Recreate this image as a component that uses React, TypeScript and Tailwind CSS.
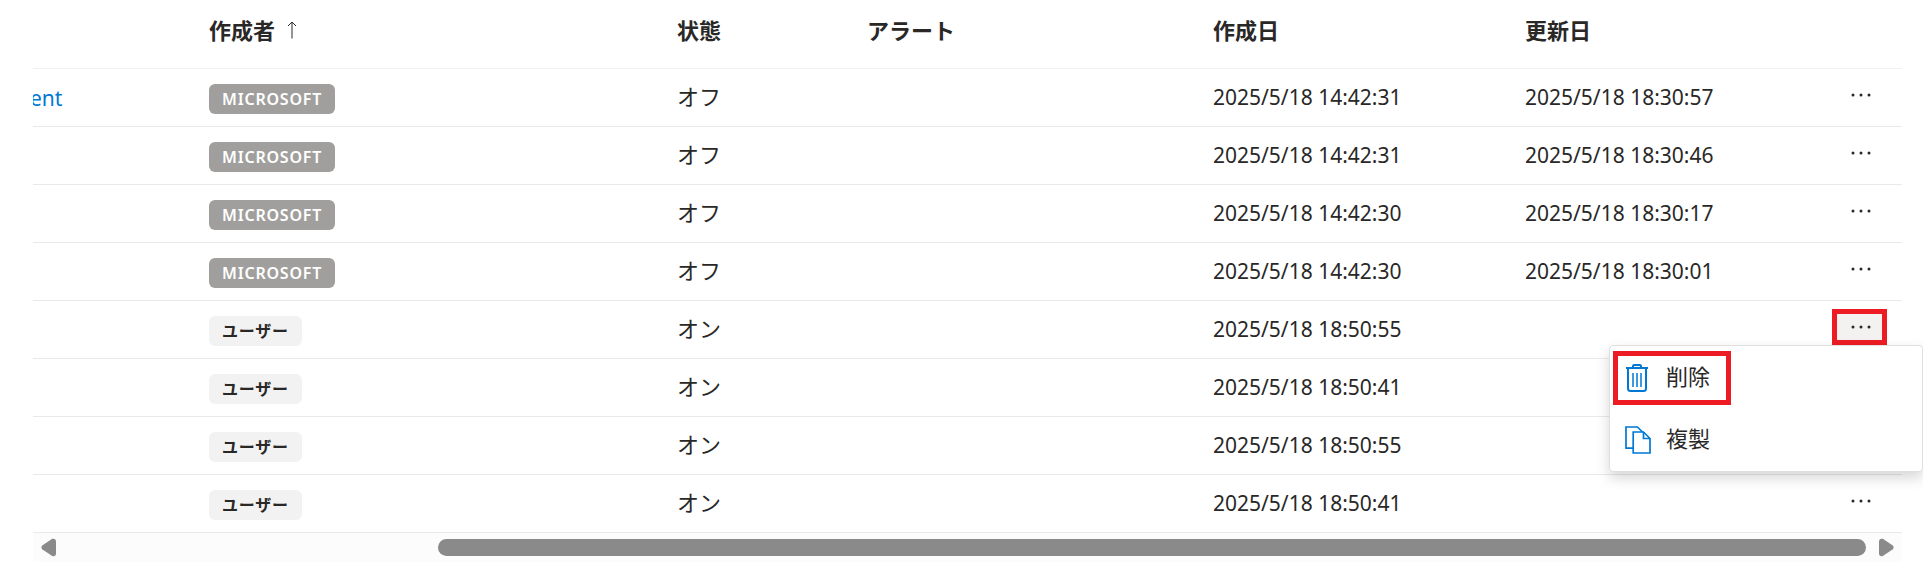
type Row = {
  link?: string;
  author: "MICROSOFT" | "ユーザー";
  status: string;
  created: string;
  updated?: string;
  menuOpen?: boolean;
};

const rows: Row[] = [
  { link: "ent", author: "MICROSOFT", status: "オフ", created: "2025/5/18 14:42:31", updated: "2025/5/18 18:30:57" },
  { author: "MICROSOFT", status: "オフ", created: "2025/5/18 14:42:31", updated: "2025/5/18 18:30:46" },
  { author: "MICROSOFT", status: "オフ", created: "2025/5/18 14:42:30", updated: "2025/5/18 18:30:17" },
  { author: "MICROSOFT", status: "オフ", created: "2025/5/18 14:42:30", updated: "2025/5/18 18:30:01" },
  { author: "ユーザー", status: "オン", created: "2025/5/18 18:50:55", menuOpen: true },
  { author: "ユーザー", status: "オン", created: "2025/5/18 18:50:41" },
  { author: "ユーザー", status: "オン", created: "2025/5/18 18:50:55" },
  { author: "ユーザー", status: "オン", created: "2025/5/18 18:50:41" },
];

function TrashIcon() {
  return (
    <svg width="28" height="28" viewBox="0 0 28 28" fill="none" stroke="#0078d4" strokeWidth="2" aria-hidden="true">
      <path d="M1 4h22M8 4V2.2Q8 1 9.2 1h5.600Q16 1 16 2.200V4" />
      <path d="M3 4v20.500Q3 27 5.500 27h13q2.500 0 2.500-2.500V4" />
      <path d="M8 9v14M12 9v14M16 9v14" strokeWidth="1.5" />
    </svg>
  );
}

function CopyIcon() {
  return (
    <svg width="28" height="28" viewBox="0 0 28 28" fill="none" stroke="#0078d4" strokeWidth="1.7" aria-hidden="true">
      <path d="M8 22.200H1V1h11.500l5 5" />
      <path d="M8.200 6h10.300l6.500 6.500V27H8.200z" />
      <path d="M18.500 6v6.500H25" />
    </svg>
  );
}

function Badge({ author }: { author: Row["author"] }) {
  const color = author === "MICROSOFT" ? "bg-[#a19f9d] text-white" : "bg-[#f2f2f2] text-[#292827]";
  return (
    <span className={`inline-flex h-[30px] items-center rounded-md px-[13px] text-base font-semibold tracking-wider ${color}`}>
      {author}
    </span>
  );
}

function RowMenu() {
  return (
    <div
      role="menu"
      className="absolute top-full -right-[36px] z-10 h-[127px] w-[314px] rounded-sm border border-[#e1dfdd] bg-white shadow-[0_6px_14px_rgba(0,0,0,0.16)]"
    >
      <button
        type="button"
        role="menuitem"
        className="mt-[5px] ml-[3px] flex h-[54px] w-[118px] items-center gap-[13px] border-[5px] border-[#ed1c24] pl-[7px] leading-7"
      >
        <TrashIcon />
        <span className="pb-1">削除</span>
      </button>
      <button type="button" role="menuitem" className="ml-[3px] flex h-[69px] w-[300px] items-center gap-[13px] pl-3 leading-7">
        <CopyIcon />
        <span className="pb-1">複製</span>
      </button>
    </div>
  );
}

function MoreButton({ open }: { open?: boolean }) {
  const state = open ? "border-[#ed1c24] bg-[#f3f2f1]" : "border-transparent";
  return (
    <button
      type="button"
      aria-label="その他"
      className={`flex h-9 w-[55px] items-center justify-center border-[5px] pl-[3px] ${state}`}
    >
      <svg width="20" height="4" viewBox="0 0 20 4" fill="#292827" aria-hidden="true">
        <circle cx="2" cy="2" r="1.5" />
        <circle cx="10" cy="2" r="1.5" />
        <circle cx="18" cy="2" r="1.5" />
      </svg>
    </button>
  );
}

function Scrollbar() {
  return (
    <div className="flex h-[29px] items-center bg-[#fcfcfc] px-2">
      <svg width="15" height="19" viewBox="0 0 15 19" fill="#8a8a8a" aria-hidden="true">
        <path d="M11.2.8 1.2 7.6q-1.5 1.6 0 3.6l10 6.8Q14.5 19 15 16V3Q14.5 0 11.2.8z" />
      </svg>
      <div className="ml-[382px] h-[17px] flex-1 rounded-full bg-[#8a8a8a]" />
      <svg className="ml-[13px]" width="15" height="19" viewBox="0 0 15 19" fill="#8a8a8a" aria-hidden="true">
        <path d="M3.8.8l10 6.8q1.5 1.6 0 3.6l-10 6.8Q.5 19 0 16V3Q.5 0 3.8.8z" />
      </svg>
    </div>
  );
}

export default function App() {
  return (
    <main className="overflow-hidden bg-white pr-[21px] pl-[33px] font-['Noto_Sans','Noto_Sans_CJK_JP',sans-serif] text-[22px] text-[#292827]">
      <table className="w-full table-fixed border-collapse text-left">
        <colgroup>
          <col className="w-[176px]" />
          <col className="w-[468px]" />
          <col className="w-[190px]" />
          <col className="w-[346px]" />
          <col className="w-[312px]" />
          <col />
          <col className="w-[70px]" />
        </colgroup>
        <thead>
          <tr className="h-[68px] border-b border-[#f0f0f0] leading-7 [&>th]:pb-2 [&>th]:font-bold">
            <th />
            <th aria-sort="ascending">
              <span className="flex items-center gap-3">
                作成者
                <svg width="10" height="18" viewBox="0 0 10 18" fill="none" stroke="#292827" aria-hidden="true">
                  <path d="M5 17.5V1M1 5l4-4 4 4" />
                </svg>
              </span>
            </th>
            <th>状態</th>
            <th>アラート</th>
            <th>作成日</th>
            <th>更新日</th>
            <th />
          </tr>
        </thead>
        <tbody>
          {rows.map((row, i) => (
            <tr key={i} className="h-[58px] border-b border-[#e9e9e9] leading-7">
              <td>
                {/* the name column is scrolled out, only the end of the link shows */}
                {row.link && (
                  <div className="overflow-hidden">
                    <a href="#" className="-ml-[3px] text-[21px] text-[#0078d4]">
                      {row.link}
                    </a>
                  </div>
                )}
              </td>
              <td>
                <div className="flex pt-1">
                  <Badge author={row.author} />
                </div>
              </td>
              <td className="pb-[2px]">{row.status}</td>
              <td />
              <td className="text-[21px]">{row.created}</td>
              <td className="text-[21px]">{row.updated}</td>
              <td className="pb-1">
                <div className="relative w-[55px]">
                  <MoreButton open={row.menuOpen} />
                  {row.menuOpen && <RowMenu />}
                </div>
              </td>
            </tr>
          ))}
        </tbody>
      </table>
      <Scrollbar />
    </main>
  );
}
